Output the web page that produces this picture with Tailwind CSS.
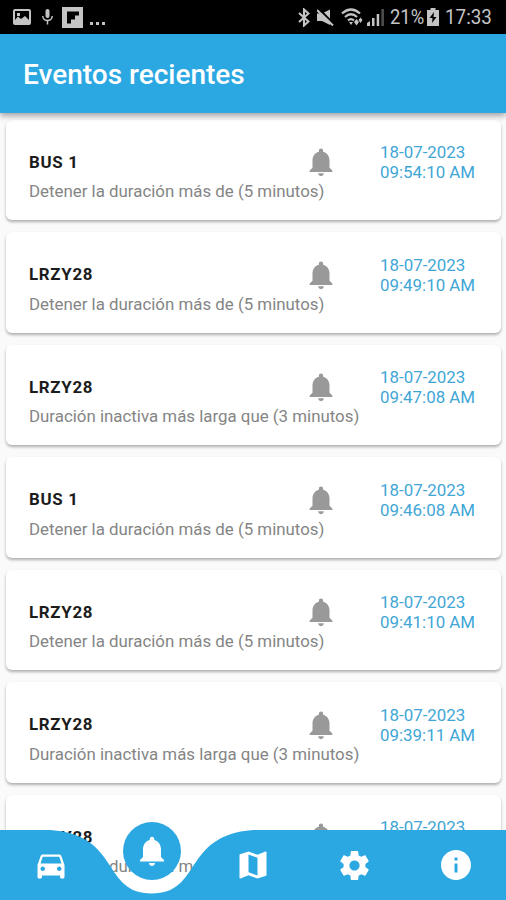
<!DOCTYPE html>
<html lang="es">
<head>
    <meta charset="UTF-8">
    <meta name="viewport" content="width=device-width, initial-scale=1.0">
    <title>Eventos recientes</title>
    <script src="https://cdn.jsdelivr.net/npm/@tailwindcss/browser@4"></script>
</head>
<body class="bg-[#fafafa] font-[Roboto,sans-serif]">
    <!-- icon shapes shared by the list and the bottom bar -->
    <svg class="hidden">
        <symbol id="bell" viewBox="0 0 24 24">
            <path d="M12 22c1.1 0 2-.9 2-2h-4c0 1.1.89 2 2 2zm6-6v-5c0-3.07-1.64-5.64-4.5-6.32V4c0-.83-.67-1.5-1.5-1.5s-1.5.67-1.5 1.5v.68C7.63 5.36 6 7.92 6 11v5l-2 2v1h16v-1l-2-2z"/>
        </symbol>
    </svg>

    <div class="relative flex flex-col w-[506px] h-[900px] overflow-hidden">
        <!-- status bar -->
        <div class="flex-none flex items-center justify-between h-[34px] bg-black text-[#c4c4c4] pl-[13px] pr-[15px]">
            <div class="flex items-center">
                <svg class="w-[18px] h-4" viewBox="0 0 18 16">
                    <path fill="currentColor" fill-rule="evenodd" d="M2 0h14a2 2 0 0 1 2 2v12a2 2 0 0 1-2 2H2a2 2 0 0 1-2-2V2a2 2 0 0 1 2-2zm0 2v9l3-3.500 3 2.500 4-3 4 4V2zm2 2h3v3H4z"/>
                </svg>
                <svg class="w-[11px] h-4 ml-[11px]" viewBox="0 0 11 16">
                    <rect x="3.500" y="0" width="4" height="9" rx="2" fill="currentColor"/>
                    <path d="M.8 7c0 6 9.400 6 9.400 0M5.500 11v4.500" fill="none" stroke="currentColor" stroke-width="1.500"/>
                </svg>
                <svg class="w-[21px] h-[21px] ml-[9px]" viewBox="0 0 21 21">
                    <path fill="currentColor" d="M0 0h21v21H0z"/>
                    <path fill="#000" d="M5 4.500h12v4h-4v4H9v4H5z"/>
                </svg>
                <svg class="w-[15px] h-[3px] ml-[7px] mt-[13px]" viewBox="0 0 15 3">
                    <path fill="currentColor" d="M0 0h3v3H0zM6 0h3v3H6zM12 0h3v3h-3z"/>
                </svg>
            </div>
            <div class="flex items-center">
                <svg class="w-3 h-[19px]" viewBox="0 0 12 19">
                    <path d="M1 5l9.500 8.500L6 17.500v-16l4.500 4L1 14" fill="none" stroke="currentColor" stroke-width="2.100"/>
                </svg>
                <svg class="w-[17px] h-[17px] ml-[7px]" viewBox="0 0 17 17">
                    <path fill="currentColor" d="M0 4.500h5l8-4v15.500L5 12H0z"/>
                    <path d="M2 0l16 16" stroke="#000" stroke-width="2"/>
                    <path d="M0 1l16 15.500" stroke="currentColor" stroke-width="2"/>
                </svg>
                <svg class="w-[22px] h-[18px] ml-[7px]" viewBox="0 0 22 18">
                    <path d="M1 5.500q9-8 18 0M4 9q6-5.500 12 0M7 12.500q3-2.800 6 0" fill="none" stroke="currentColor" stroke-width="2.300"/>
                    <path fill="currentColor" d="M8 14h4l-2 3zM13 14l2.500-3 2.500 3-2.500 3.500zM17.500 12l2-2.500 2 2.500-2 3z"/>
                </svg>
                <svg class="w-[17px] h-[17px] ml-[4px]" viewBox="0 0 17 17">
                    <path fill="currentColor" d="M0 14l3-2v5H0zM5 9h2.500v8H5zM9.700 5h2.500v12H9.700z"/>
                    <path fill="#4a4a4a" d="M14.300 0H17v17h-2.700z"/>
                </svg>
                <span class="ml-[6px] w-[35px] text-[20px] leading-[36px] whitespace-nowrap origin-left scale-x-[0.92]">21%</span>
                <svg class="w-3 h-[18px] ml-[2px]" viewBox="0 0 12 18">
                    <path fill="currentColor" d="M3.500 0h5v2H12v16H0V2h3.500z"/>
                    <path fill="#000" d="M7 4L2.500 10h3L5 15l4.500-6h-3z"/>
                </svg>
                <span class="ml-[6px] w-[46px] text-[20px] leading-[36px] whitespace-nowrap origin-left scale-x-[0.94]">17:33</span>
            </div>
        </div>

        <!-- app bar -->
        <header class="relative z-10 flex-none flex items-center h-[79px] bg-[#2ba7e2] px-[23px] pt-[3px] shadow-[0_3px_6px_rgba(0,0,0,0.35)]">
            <h1 class="text-white text-[28px] font-medium whitespace-nowrap">Eventos recientes</h1>
        </header>

        <!-- events, filled in below -->
        <main id="events" class="flex flex-col gap-3 pt-[6.500px] pl-[6px] pr-[5px]"></main>

        <template id="event-row">
            <article class="flex-none flex h-[100.500px] rounded-[6px] bg-white pl-[23px] shadow-[0_2px_3px_rgba(0,0,0,0.3)]">
                <div class="relative w-[351px] pt-[30px]">
                    <h2 class="text-[16.900px] leading-[24px] tracking-[0.700px] font-bold text-[#1c1c1c]" data-name></h2>
                    <p class="mt-[5.900px] text-[16.870px] leading-[24px] text-[#858585] whitespace-nowrap" data-text></p>
                    <svg class="absolute left-[275px] top-[25.500px] size-[34px] fill-[#999]"><use href="#bell"/></svg>
                </div>
                <p class="pt-[22.900px] text-[16.900px] leading-[20px] text-[#3fa6d6] whitespace-nowrap"><span data-date></span><br><span data-time></span></p>
            </article>
        </template>

        <!-- bottom bar with the notch under the selected item -->
        <nav class="absolute inset-x-0 bottom-0 z-20 h-[70px]">
            <svg class="absolute inset-0 w-[506px] h-[70px]" viewBox="0 0 506 70">
                <path fill="#2ba7e2" d="M0 0H50.600C121.400 5.300 101.200 63.500 151.800 63.500S182.200 5.300 253 0H506V70H0z"/>
            </svg>
            <div class="relative grid grid-cols-5 h-full justify-items-center items-center text-white">
                <svg class="size-9" viewBox="0 0 24 24" fill="currentColor">
                    <path d="M18.920 6.010C18.720 5.420 18.160 5 17.500 5h-11c-.66 0-1.210.42-1.420 1.010L3 12v8c0 .55.45 1 1 1h1c.55 0 1-.45 1-1v-1h12v1c0 .55.45 1 1 1h1c.55 0 1-.45 1-1v-8l-2.080-5.990zM6.500 16c-.83 0-1.500-.67-1.500-1.500S5.670 13 6.500 13s1.500.67 1.500 1.500S7.330 16 6.500 16zm11 0c-.83 0-1.500-.67-1.500-1.500s.67-1.500 1.500-1.500 1.500.67 1.500 1.500-.67 1.500-1.500 1.500zM5 11l1.500-4.500h11L19 11H5z"/>
                </svg>
                <div class="flex items-center justify-center size-[58px] rounded-full bg-[#2ba7e2] -mt-[29px]">
                    <svg class="size-9" fill="currentColor"><use href="#bell"/></svg>
                </div>
                <svg class="size-9" viewBox="0 0 24 24" fill="currentColor">
                    <path d="M20.500 3l-.16.030L15 5.100 9 3 3.360 4.900c-.21.070-.36.250-.36.480V20.500c0 .28.22.5.5.5l.16-.030L9 18.900l6 2.100 5.640-1.900c.21-.070.36-.250.36-.480V3.500c0-.28-.22-.5-.5-.5zM15 19l-6-2.110V5l6 2.110V19z"/>
                </svg>
                <svg class="size-[35px]" viewBox="0 0 24 24" fill="currentColor">
                    <path d="M19.430 12.980c.040-.320.070-.640.070-.980s-.030-.660-.070-.980l2.110-1.650c.190-.150.240-.420.120-.640l-2-3.460c-.120-.220-.390-.300-.610-.220l-2.490 1c-.520-.400-1.080-.730-1.690-.980l-.380-2.650C14.460 2.180 14.250 2 14 2h-4c-.250 0-.460.180-.490.420l-.380 2.650c-.610.250-1.170.590-1.690.980l-2.490-1c-.230-.090-.490 0-.610.220l-2 3.460c-.130.220-.070.490.120.640l2.110 1.650c-.040.320-.070.650-.070.980s.030.660.070.980l-2.110 1.650c-.190.150-.240.420-.120.640l2 3.460c.120.220.390.300.610.220l2.490-1c.520.400 1.080.730 1.690.980l.380 2.650c.030.240.240.420.490.420h4c.250 0 .460-.180.490-.420l.380-2.650c.610-.250 1.170-.590 1.690-.980l2.490 1c.230.090.490 0 .610-.220l2-3.460c.120-.220.070-.490-.120-.640l-2.110-1.650zM12 15.500c-1.930 0-3.500-1.570-3.500-3.500s1.570-3.500 3.500-3.500 3.500 1.570 3.500 3.500-1.570 3.500-3.500 3.500z"/>
                </svg>
                <svg class="size-9 ml-[2px]" viewBox="0 0 24 24" fill="currentColor">
                    <path d="M12 2C6.480 2 2 6.480 2 12s4.480 10 10 10 10-4.480 10-10S17.520 2 12 2zm1 15h-2v-6h2v6zm0-8h-2V7h2v2z"/>
                </svg>
            </div>
        </nav>
    </div>

    <script>
        const stop = 'Detener la duración más de (5 minutos)';
        const idle = 'Duración inactiva más larga que (3 minutos)';
        const events = [
            ['BUS 1', stop, '09:54:10 AM'],
            ['LRZY28', stop, '09:49:10 AM'],
            ['LRZY28', idle, '09:47:08 AM'],
            ['BUS 1', stop, '09:46:08 AM'],
            ['LRZY28', stop, '09:41:10 AM'],
            ['LRZY28', idle, '09:39:11 AM'],
            ['LRZY28', stop, '09:38:10 AM'],
        ];

        const list = document.getElementById('events');
        const template = document.getElementById('event-row');

        events.forEach(([name, text, time]) => {
            const row = template.content.cloneNode(true);
            row.querySelector('[data-name]').textContent = name;
            row.querySelector('[data-text]').textContent = text;
            row.querySelector('[data-date]').textContent = '18-07-2023';
            row.querySelector('[data-time]').textContent = time;
            list.appendChild(row);
        });
    </script>
</body>
</html>
